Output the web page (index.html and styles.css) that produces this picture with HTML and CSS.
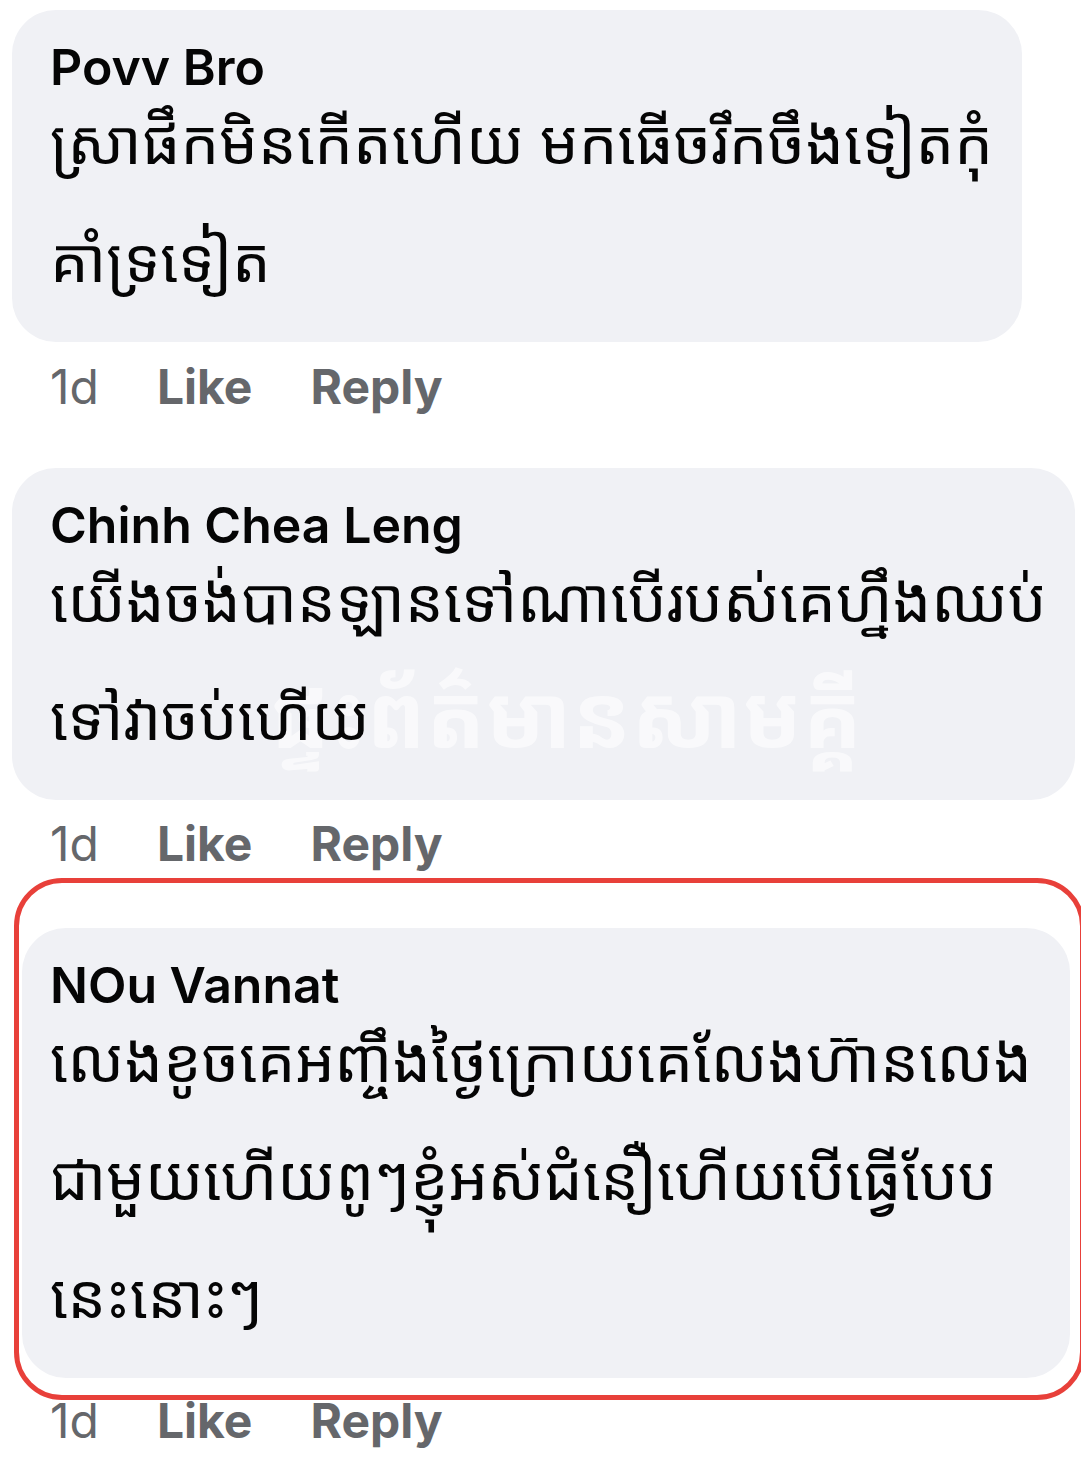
FILE: index.html
```html
<!doctype html>
<html>
<head>
<meta charset="utf-8">
<title>Comments</title>
<link rel="stylesheet" href="styles.css">
</head>
<body>
<div class="thread">

<div class="comment">
<div class="bubble">
<div class="name">Povv Bro</div>
<div class="text">ស្រាផឹកមិនកើតហើយ មកធើចរឹកចឹងទៀតកុំ<br>គាំទ្រទៀត</div>
</div>
<div class="actions"><span class="time">1d</span><span class="act">Like</span><span class="act">Reply</span></div>
</div>

<div class="comment">
<div class="bubble wide">
<div class="mark">ផ្ទះព័ត៌មានសាមគ្គី</div>
<div class="name">Chinh Chea Leng</div>
<div class="text">យើងចង់បានឡានទៅណាបើរបស់គេហ្នឹងឈប់<br>ទៅវាចប់ហើយ</div>
</div>
<div class="actions short"><span class="time">1d</span><span class="act">Like</span><span class="act">Reply</span></div>
</div>

<div class="comment marked">
<div class="frame">
<div class="bubble">
<div class="name">NOu Vannat</div>
<div class="text">លេងខូចគេអញ្ចឹងថ្ងៃក្រោយគេលែងហ៊ានលេង<br>ជាមួយហើយពូៗខ្ញុំអស់ជំនឿហើយបើធ្វើបែប<br>នេះនោះៗ</div>
</div>
</div>
<div class="actions"><span class="time">1d</span><span class="act">Like</span><span class="act">Reply</span></div>
</div>

</div>
</body>
</html>
```

FILE: styles.css
```css
body{
margin:0;
background:#fff;
color:#050505;
font-family:Inter, "Liberation Sans", sans-serif;
}
.thread{
padding:10px 0 0 12px;
overflow:hidden;
}
.bubble{
position:relative;
background:#f0f1f5;
border-radius:44px;
width:1010px;
height:332px;
box-sizing:border-box;
padding:28px 0 0 38px;
}
.bubble.wide{
width:1063px;
}
.name,.text{
position:relative;
}
.name{
font-size:50px;
font-weight:600;
line-height:58px;
}
.text{
font-family:"Noto Sans Khmer","Khmer OS","Noto Sans",sans-serif;
font-size:61px;
line-height:118px;
margin-top:-14px;
white-space:nowrap;
}
/* faint watermark over the second comment */
.mark{
position:absolute;
left:258px;
top:186px;
font-family:"Noto Sans Khmer","Khmer OS","Noto Sans",sans-serif;
font-size:88px;
font-weight:700;
white-space:nowrap;
color:rgba(255,255,255,0.6);
}
.actions{
display:flex;
gap:58px;
padding:17px 0 0 38px;
height:126px;
box-sizing:border-box;
font-size:48px;
line-height:56px;
color:#65676b;
}
.actions.short{
height:78px;
padding-top:16px;
}
.time{
font-weight:400;
}
.act{
font-weight:700;
}
.frame{
border:5px solid #e8403a;
border-radius:48px;
margin:0 -4px 0 2px;
padding:45px 10px 17px 3px;
}
.marked .bubble{
width:auto;
height:450px;
padding-left:28px;
}
.marked .actions{
padding-top:0;
margin-top:-7px;
}
```
